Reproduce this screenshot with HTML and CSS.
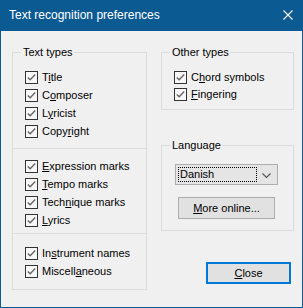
FILE: index.html
```html
<!DOCTYPE html>
<html lang="en">
<head>
  <meta charset="UTF-8">
  <title>Text recognition preferences</title>
  <link rel="stylesheet" href="styles.css">
</head>
<body>
  <div class="window">
    <div class="titlebar">
      <span class="title-text">Text recognition preferences</span>
      <svg class="title-close" width="10" height="10" viewBox="0 0 10 10">
        <path d="M0.5 0.5 L9.5 9.5 M9.5 0.5 L0.5 9.5" stroke="#fff" stroke-width="1.1" fill="none"/>
      </svg>
    </div>

    <div class="content">
      <fieldset class="group group-left">
        <legend>Text types</legend>
        <div class="section section-1">
          <div class="check-row"><span class="box"><svg width="13" height="13" viewBox="0 0 13 13"><rect x="0.5" y="0.5" width="12" height="12" fill="#f7f7f7" stroke="#333"/><path d="M2.8 6.4 L5.2 8.8 L10.2 3.6" stroke="#666" stroke-width="1.4" fill="none"/></svg></span><span class="label">T<u>i</u>tle</span></div>
          <div class="check-row"><span class="box"><svg width="13" height="13" viewBox="0 0 13 13"><rect x="0.5" y="0.5" width="12" height="12" fill="#f7f7f7" stroke="#333"/><path d="M2.8 6.4 L5.2 8.8 L10.2 3.6" stroke="#666" stroke-width="1.4" fill="none"/></svg></span><span class="label">C<u>o</u>mposer</span></div>
          <div class="check-row"><span class="box"><svg width="13" height="13" viewBox="0 0 13 13"><rect x="0.5" y="0.5" width="12" height="12" fill="#f7f7f7" stroke="#333"/><path d="M2.8 6.4 L5.2 8.8 L10.2 3.6" stroke="#666" stroke-width="1.4" fill="none"/></svg></span><span class="label">L<u>y</u>ricist</span></div>
          <div class="check-row"><span class="box"><svg width="13" height="13" viewBox="0 0 13 13"><rect x="0.5" y="0.5" width="12" height="12" fill="#f7f7f7" stroke="#333"/><path d="M2.8 6.4 L5.2 8.8 L10.2 3.6" stroke="#666" stroke-width="1.4" fill="none"/></svg></span><span class="label">Copy<u>r</u>ight</span></div>
        </div>
        <div class="section section-2">
          <div class="check-row"><span class="box"><svg width="13" height="13" viewBox="0 0 13 13"><rect x="0.5" y="0.5" width="12" height="12" fill="#f7f7f7" stroke="#333"/><path d="M2.8 6.4 L5.2 8.8 L10.2 3.6" stroke="#666" stroke-width="1.4" fill="none"/></svg></span><span class="label"><u>E</u>xpression marks</span></div>
          <div class="check-row"><span class="box"><svg width="13" height="13" viewBox="0 0 13 13"><rect x="0.5" y="0.5" width="12" height="12" fill="#f7f7f7" stroke="#333"/><path d="M2.8 6.4 L5.2 8.8 L10.2 3.6" stroke="#666" stroke-width="1.4" fill="none"/></svg></span><span class="label"><u>T</u>empo marks</span></div>
          <div class="check-row"><span class="box"><svg width="13" height="13" viewBox="0 0 13 13"><rect x="0.5" y="0.5" width="12" height="12" fill="#f7f7f7" stroke="#333"/><path d="M2.8 6.4 L5.2 8.8 L10.2 3.6" stroke="#666" stroke-width="1.4" fill="none"/></svg></span><span class="label">Tech<u>n</u>ique marks</span></div>
          <div class="check-row"><span class="box"><svg width="13" height="13" viewBox="0 0 13 13"><rect x="0.5" y="0.5" width="12" height="12" fill="#f7f7f7" stroke="#333"/><path d="M2.8 6.4 L5.2 8.8 L10.2 3.6" stroke="#666" stroke-width="1.4" fill="none"/></svg></span><span class="label"><u>L</u>yrics</span></div>
        </div>
        <div class="section section-3">
          <div class="check-row"><span class="box"><svg width="13" height="13" viewBox="0 0 13 13"><rect x="0.5" y="0.5" width="12" height="12" fill="#f7f7f7" stroke="#333"/><path d="M2.8 6.4 L5.2 8.8 L10.2 3.6" stroke="#666" stroke-width="1.4" fill="none"/></svg></span><span class="label">In<u>s</u>trument names</span></div>
          <div class="check-row"><span class="box"><svg width="13" height="13" viewBox="0 0 13 13"><rect x="0.5" y="0.5" width="12" height="12" fill="#f7f7f7" stroke="#333"/><path d="M2.8 6.4 L5.2 8.8 L10.2 3.6" stroke="#666" stroke-width="1.4" fill="none"/></svg></span><span class="label">Miscell<u>a</u>neous</span></div>
        </div>
      </fieldset>

      <div class="right-col">
        <fieldset class="group">
          <legend>Other types</legend>
          <div class="group-body other-body">
            <div class="check-row"><span class="box"><svg width="13" height="13" viewBox="0 0 13 13"><rect x="0.5" y="0.5" width="12" height="12" fill="#f7f7f7" stroke="#333"/><path d="M2.8 6.4 L5.2 8.8 L10.2 3.6" stroke="#666" stroke-width="1.4" fill="none"/></svg></span><span class="label">C<u>h</u>ord symbols</span></div>
            <div class="check-row"><span class="box"><svg width="13" height="13" viewBox="0 0 13 13"><rect x="0.5" y="0.5" width="12" height="12" fill="#f7f7f7" stroke="#333"/><path d="M2.8 6.4 L5.2 8.8 L10.2 3.6" stroke="#666" stroke-width="1.4" fill="none"/></svg></span><span class="label"><u>F</u>ingering</span></div>
          </div>
        </fieldset>

        <fieldset class="group group-lang">
          <legend>Language</legend>
          <div class="group-body lang-body">
            <div class="combo">
              <span class="combo-value">Danish</span>
              <svg class="combo-arrow" width="9" height="5" viewBox="0 0 9 5">
                <path d="M0.5 0.5 L4.5 4.5 L8.5 0.5" stroke="#555" stroke-width="1.1" fill="none"/>
              </svg>
            </div>
            <div class="btn btn-more"><u>M</u>ore online...</div>
          </div>
        </fieldset>

        <div class="btn btn-close"><u>C</u>lose</div>
      </div>
    </div>
  </div>
</body>
</html>
```

FILE: styles.css
```css
body {
  margin: 0;
  font-family: "Liberation Sans", Arial, sans-serif;
  font-size: 11px;
  color: #000;
}
.window {
  width: 303px;
  height: 308px;
  box-sizing: border-box;
  background: #f0f0f0;
  border: 1px solid #0b5a91;
  border-top: none;
  display: flex;
  flex-direction: column;
}
.titlebar {
  height: 31px;
  margin: 0 -1px;
  background: #0b5a91;
  color: #fff;
  display: flex;
  align-items: center;
  justify-content: space-between;
  padding: 0 10px 0 9px;
  flex-shrink: 0;
}
.title-text {
  font-size: 12px;
  padding-bottom: 1px;
}
.title-close {
  margin-bottom: 1px;
}
.content {
  display: flex;
  padding: 15px 0 0 11px;
  gap: 14px;
}
.group {
  margin: 0;
  padding: 0;
  border: 1px solid #dcdcdc;
}
.group legend {
  margin-left: 8px;
  padding: 0 1px 0 2px;
  line-height: 13px;
}
.group-left {
  width: 135px;
  height: 244px;
  box-sizing: border-box;
}
.section {
  padding-left: 12px;
}
.section-1 {
  padding-top: 10px;
  padding-bottom: 7px;
}
.section-2 {
  border-top: 1px solid #dcdcdc;
  padding-top: 9px;
  padding-bottom: 3px;
}
.section-3 {
  border-top: 1px solid #dcdcdc;
  padding-top: 11px;
}
.check-row {
  display: flex;
  align-items: flex-start;
  height: 18px;
}
.box {
  width: 13px;
  height: 13px;
  margin-top: 2px;
  margin-right: 4px;
  display: flex;
}
.label {
  line-height: 17px;
}
.right-col {
  width: 133px;
  display: flex;
  flex-direction: column;
}
.other-body {
  padding: 10px 0 6px 12px;
}
.other-body .check-row {
  height: 17px;
}
.group-lang {
  margin-top: 29px;
}
.lang-body {
  padding: 12px 0 11px 13px;
}
.combo {
  width: 103px;
  height: 21px;
  box-sizing: border-box;
  border: 1px solid #adadad;
  background: #e5e5e5;
  display: flex;
  align-items: center;
  justify-content: space-between;
  padding: 0 6px 0 2px;
}
.combo-value {
  width: 79px;
  height: 15px;
  box-sizing: border-box;
  border: 1px dotted #000;
  line-height: 13px;
  padding-left: 1px;
}
.combo-arrow {
  margin-top: 1px;
}
.btn {
  box-sizing: border-box;
  border: 1px solid #adadad;
  background: #e1e1e1;
  text-align: center;
}
.btn-more {
  width: 97px;
  height: 22px;
  line-height: 20px;
  margin: 12px 0 0 3px;
}
.btn-close {
  width: 85px;
  height: 22px;
  line-height: 18px;
  border: 2px solid #0078d7;
  align-self: flex-end;
  margin: 31px 3px 0 0;
}
```
